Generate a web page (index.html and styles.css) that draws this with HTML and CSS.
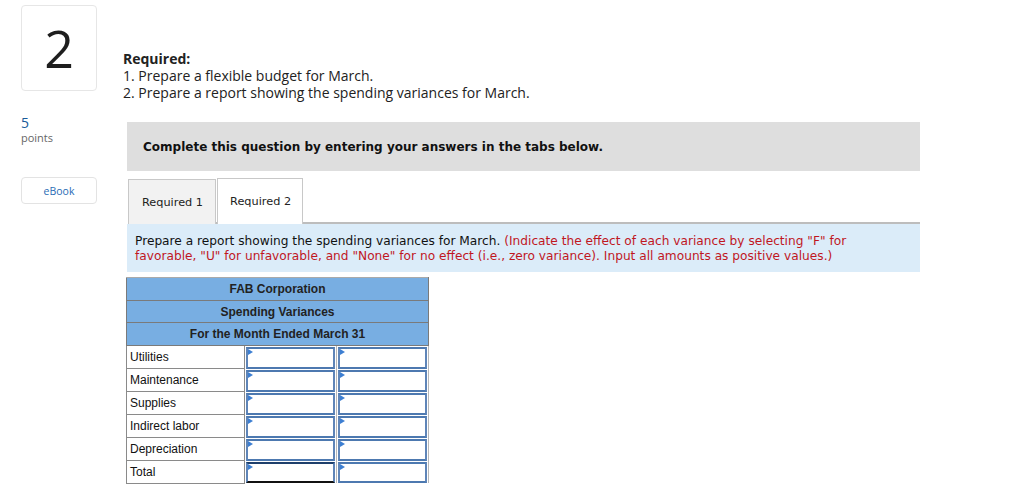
FILE: index.html
```html
<!DOCTYPE html>
<html>
<head>
<meta charset="utf-8">
<link rel="stylesheet" href="styles.css">
</head>
<body>
<div class="page">
  <aside class="side">
    <div class="qnum">2</div>
    <div class="pts"><span class="pts-n">5</span><span class="pts-l">points</span></div>
    <div class="ebook">eBook</div>
  </aside>
  <main class="content">
    <div class="req">
      <div class="req-h">Required:</div>
      <div>1. Prepare a flexible budget for March.</div>
      <div>2. Prepare a report showing the spending variances for March.</div>
    </div>
    <div class="banner">Complete this question by entering your answers in the tabs below.</div>
    <div class="tabs">
      <div class="tab">Required 1</div>
      <div class="tab active">Required 2</div>
    </div>
    <div class="instr">Prepare a report showing the spending variances for March. <span class="red">(Indicate the effect of each variance by selecting "F" for favorable, "U" for unfavorable, and "None" for no effect (i.e., zero variance). Input all amounts as positive values.)</span></div>
    <table class="sheet">
      <colgroup><col class="c-lbl"><col class="c-in"><col class="c-in"></colgroup>
      <tr class="hd"><th colspan="3">FAB Corporation</th></tr>
      <tr class="hd"><th colspan="3">Spending Variances</th></tr>
      <tr class="hd"><th colspan="3">For the Month Ended March 31</th></tr>
      <tr><td class="lbl">Utilities</td><td class="in"><div class="box"></div></td><td class="in"><div class="box"></div></td></tr>
      <tr><td class="lbl">Maintenance</td><td class="in"><div class="box"></div></td><td class="in"><div class="box"></div></td></tr>
      <tr><td class="lbl">Supplies</td><td class="in"><div class="box"></div></td><td class="in"><div class="box"></div></td></tr>
      <tr><td class="lbl">Indirect labor</td><td class="in"><div class="box"></div></td><td class="in"><div class="box"></div></td></tr>
      <tr><td class="lbl">Depreciation</td><td class="in"><div class="box"></div></td><td class="in"><div class="box"></div></td></tr>
      <tr><td class="lbl">Total</td><td class="in"><div class="box total"></div></td><td class="in"><div class="box"></div></td></tr>
    </table>
  </main>
</div>
</body>
</html>
```

FILE: styles.css
```css
* { box-sizing: border-box; }
html, body { margin: 0; padding: 0; background: #fff; }
body { font-family: "Open Sans", "Lato", sans-serif; color: #222; }

.page { display: flex; padding: 5px 0 0 21px; }

.side { width: 76px; flex: none; display: flex; flex-direction: column; }
.qnum {
  width: 76px; height: 86px;
  border: 1px solid #e6e6e6; border-radius: 4px;
  display: flex; align-items: center; justify-content: center;
  font-family: "Open Sans", "Lato", sans-serif; font-weight: 400;
  font-size: 52px; color: #1e1e1e; line-height: 1;
}
.pts { display: flex; flex-direction: column; margin-top: 24px; }
.pts-n { font-size: 14px; color: #1a5b99; line-height: 16px; }
.pts-l { font-size: 11px; color: #666; line-height: 14px; }
.ebook {
  margin-top: 32px; height: 27px;
  border: 1px solid #e3e3e3; border-radius: 4px;
  display: flex; align-items: center; justify-content: center;
  font-size: 10.5px; color: #2a6cb5;
}

.content { margin-left: 26px; width: 797px; display: flex; flex-direction: column; }

.req { padding-top: 45px; font-size: 14px; line-height: 17px; color: #222; }
.req-h { font-weight: 700; }

.banner {
  margin: 21px 0 0 4px; height: 49px;
  background: #dedede;
  display: flex; align-items: center; padding-left: 16px;
  font-family: "DejaVu Sans", Verdana, sans-serif; font-weight: 700;
  font-size: 12px; color: #111;
}

.tabs { display: flex; margin: 7px 0 0 5px; align-items: flex-end; gap: 1px; border-bottom: 2px solid #bdbdbd; }
.tab {
  background: #f2f2f2; border: 1px solid #c8c8c8; border-bottom: none;
  display: flex; align-items: center;
  font-family: "DejaVu Sans", Verdana, sans-serif; font-size: 11.3px; color: #222;
  margin-bottom: -2px; height: 45px; padding: 0 12px 0 13px;
}
.tab.active { background: #fff; height: 46px; padding: 0 11px 0 12px; }

.instr {
  margin-left: 4px; height: 48px;
  background: #dbecf9;
  padding: 10px 40px 0 8px;
  font-family: "DejaVu Sans", Verdana, sans-serif; font-size: 12.2px; line-height: 15px; color: #111;
}
.red { color: #c0171f; }

.sheet {
  margin: 5px 0 0 3px; border-collapse: collapse;
  width: 302px; table-layout: fixed;
  font-family: "Liberation Sans", Arial, sans-serif; font-size: 12px;
}
.c-lbl { width: 118px; }
.c-in { width: 92px; }
.sheet th {
  background: #78aee2; height: 22.7px; padding: 0;
  border: 1px solid #7a7a7a; border-top-color: #aaa;
  font-weight: 700; color: #222; text-align: center;
}
.sheet td { padding: 0; height: 22.9px; }
.sheet td.lbl { border: 1px solid #8a8a8a; padding-left: 3px; color: #111; }
.sheet td.in { padding: 1px 1px 0 1px; border-right: 1px solid #b8b8b8; }
.box {
  position: relative; height: 21.9px;
  border: 2px solid #4d79b0; border-left-color: #5f85b8; border-right-color: #5f85b8;
  background: #fff;
}
.box::before {
  content: ""; position: absolute; left: 0; top: 0;
  border-left: 5px solid #3d7fd2; border-top: 3px solid transparent; border-bottom: 3px solid transparent;
}
.box.total { border-top-color: #1e3f6b; border-bottom: 2px solid #111; }
```
